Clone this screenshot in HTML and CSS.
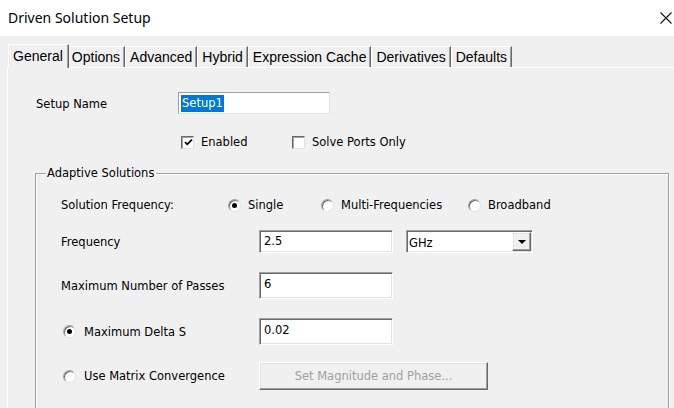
FILE: index.html
```html
<!DOCTYPE html>
<html>
<head>
<meta charset="utf-8">
<link rel="stylesheet" href="styles.css">
</head>
<body>
<div class="window">
  <div class="titlebar">
    <span class="title">Driven Solution Setup</span>
    <svg class="close" width="12" height="12" viewBox="0 0 12 12"><path d="M0.5 0.5 L11.5 11.5 M11.5 0.5 L0.5 11.5" stroke="#111" stroke-width="1.1" fill="none"/></svg>
  </div>

  <div class="tabs">
    <div class="tab selected">General</div>
    <div class="tab">Options</div>
    <div class="tab">Advanced</div>
    <div class="tab">Hybrid</div>
    <div class="tab">Expression Cache</div>
    <div class="tab">Derivatives</div>
    <div class="tab">Defaults</div>
  </div>

  <div class="panel">
    <div class="row setup-row">
      <span class="label setup-label">Setup Name</span>
      <div class="input sunken setup-input"><span class="sel">Setup1</span></div>
    </div>

    <div class="row check-row">
      <label class="check-item enabled">
        <span class="checkbox"><svg width="9" height="9" viewBox="0 0 9 9"><path d="M1 4 L3.2 6.3 L8 1.6" stroke="#000" stroke-width="1.8" fill="none"/></svg></span>
        <span>Enabled</span>
      </label>
      <label class="check-item">
        <span class="checkbox"></span>
        <span>Solve Ports Only</span>
      </label>
    </div>

    <fieldset class="group">
      <legend>Adaptive Solutions</legend>

      <div class="row sf-row">
        <span class="label sf-label">Solution Frequency:</span>
        <span class="radio-item single"><span class="radio on"></span>Single</span>
        <span class="radio-item multi"><span class="radio"></span>Multi-Frequencies</span>
        <span class="radio-item"><span class="radio"></span>Broadband</span>
      </div>

      <div class="row freq-row">
        <span class="label col-label">Frequency</span>
        <div class="input sunken field">2.5</div>
        <div class="combo sunken">
          <span class="combo-text">GHz</span>
          <span class="combo-btn raised"><svg width="8" height="4" viewBox="0 0 8 4"><path d="M0 0 H8 L4 4 Z" fill="#000"/></svg></span>
        </div>
      </div>

      <div class="row tall-row passes-row">
        <span class="label col-label">Maximum Number of Passes</span>
        <div class="input sunken field tall">6</div>
      </div>

      <div class="row tall-row delta-row">
        <span class="label col-label radio-label"><span class="radio on"></span>Maximum Delta S</span>
        <div class="input sunken field tall">0.02</div>
      </div>

      <div class="row matrix-row">
        <span class="label col-label radio-label"><span class="radio"></span>Use Matrix Convergence</span>
        <div class="button raised">Set Magnitude and Phase...</div>
      </div>
    </fieldset>
  </div>
</div>
</body>
</html>
```

FILE: styles.css
```css
* { box-sizing: border-box; }
html, body {
  margin: 0;
  padding: 0;
  background: #f0f0f0;
}
.window {
  width: 674px;
  height: 408px;
  overflow: hidden;
  background: #f0f0f0;
  font-family: "DejaVu Sans", sans-serif;
  font-size: 11.5px;
  color: #000;
}
.titlebar {
  height: 36px;
  background: #fff;
  display: flex;
  align-items: center;
  justify-content: space-between;
  padding: 0 2px 0 8px;
}
.title {
  font-family: "Noto Sans", sans-serif;
  font-size: 14px;
  color: #000;
  margin-top: -1px;
}
.close { margin-top: -1px; }

.tabs {
  display: flex;
  align-items: flex-end;
  margin-top: 8px;
  height: 23px;
  padding-left: 10px;
  font-family: "Liberation Sans", sans-serif;
  font-size: 14px;
  position: relative;
  z-index: 1;
}
.tab {
  height: 21px;
  line-height: 20px;
  padding: 0 4px 0 4px;
  border-top: 1px solid #fff;
  border-left: 1px solid #fff;
  border-right: 1px solid #696969;
  box-shadow: inset -1px 0 0 #a0a0a0;
  background: #f0f0f0;
}
.tab.selected {
  height: 24px;
  margin: 0 -2px 0 -2px;
  padding: 0 5px 0 4px;
  margin-bottom: -1px;
  line-height: 22px;
  position: relative;
  z-index: 2;
}
.panel {
  border-top: 1px solid #fff;
  border-left: 1px solid #fff;
  margin-left: 7px;
  padding-left: 28px;
  padding-top: 24px;
  height: 341px;
}
.row {
  display: flex;
  align-items: center;
}
.label { white-space: nowrap; }
.setup-row { height: 22px; }
.setup-label { width: 142px; padding-top: 1px; }
.input {
  background: #fff;
  display: flex;
  align-items: center;
  padding-left: 4px;
}
.sunken {
  border: 1px solid;
  border-color: #a0a0a0 #fff #fff #a0a0a0;
  box-shadow: inset 1px 1px 0 #696969, inset -1px -1px 0 #e3e3e3;
}
.raised {
  border: 1px solid;
  border-color: #fff #696969 #696969 #fff;
  box-shadow: inset -1px -1px 0 #a0a0a0, inset 1px 1px 0 #e3e3e3;
  background: #f0f0f0;
}
.setup-input {
  width: 152px;
  height: 22px;
  padding-left: 2px;
  border-color: #a0a0a0 #e3e3e3 #e3e3e3 #a0a0a0;
  box-shadow: none;
}
.sel {
  background: #0078d7;
  color: #fff;
  line-height: 17px;
  padding: 0 1px;
}
.check-row {
  margin-top: 20px;
  height: 16px;
  padding-left: 145px;
}
.check-item {
  display: flex;
  align-items: center;
  gap: 7px;
}
.check-item.enabled { width: 111px; }
.checkbox {
  width: 13px;
  height: 13px;
  background: #fff;
  border: 1px solid;
  border-color: #696969 #e3e3e3 #e3e3e3 #696969;
  box-shadow: inset 1px 1px 0 #a0a0a0;
  display: flex;
  align-items: center;
  justify-content: center;
}
.checkbox svg { margin-left: 1px; margin-top: 1px; }

.group {
  margin: 15px 0 0 -1px;
  padding: 16px 0 0 25px;
  width: 634px;
  height: 260px;
  border: 1px solid #a0a0a0;
  box-shadow: inset 1px 1px 0 #fff, 1px 1px 0 #fff;
  min-width: 0;
}
.group legend {
  padding: 0 2px 0 1px;
  margin-left: -15px;
  line-height: 16px;
}
.sf-row { height: 16px; }
.sf-label { width: 167px; }
.radio-item {
  display: flex;
  align-items: center;
  gap: 7px;
}
.radio-item.single { width: 93px; }
.radio-item.multi { width: 147px; }
.radio {
  width: 13px;
  height: 13px;
  border-radius: 50%;
  background: #fff;
  border: 1px solid;
  border-color: #a0a0a0 #e3e3e3 #e3e3e3 #a0a0a0;
  box-shadow: inset 1px 1px 0 #696969;
  position: relative;
  flex: none;
}
.radio.on::after {
  content: "";
  position: absolute;
  left: 3px;
  top: 3px;
  width: 5px;
  height: 5px;
  border-radius: 50%;
  background: #000;
}
.col-label { width: 198px; }
.radio-label {
  display: flex;
  align-items: center;
  gap: 8px;
  padding-left: 2px;
}
.freq-row { margin-top: 17px; height: 23px; }
.field {
  width: 134px;
  height: 23px;
  align-items: flex-start;
  padding-top: 3px;
}
.field.tall { height: 27px; padding-top: 4px; }
.passes-row { margin-top: 19px; height: 27px; }
.delta-row { margin-top: 19px; height: 27px; }
.combo {
  margin-left: 13px;
  width: 127px;
  height: 23px;
  background: #fff;
  display: flex;
  align-items: center;
  justify-content: space-between;
  padding: 0 1px 0 2px;
}
.combo-text { margin-top: 3px; }
.combo-btn {
  width: 19px;
  height: 19px;
  display: flex;
  align-items: center;
  justify-content: center;
}
.matrix-row { margin-top: 17px; height: 28px; }
.button {
  width: 229px;
  height: 28px;
  display: flex;
  align-items: center;
  justify-content: center;
  color: #a0a0a0;
}
```
